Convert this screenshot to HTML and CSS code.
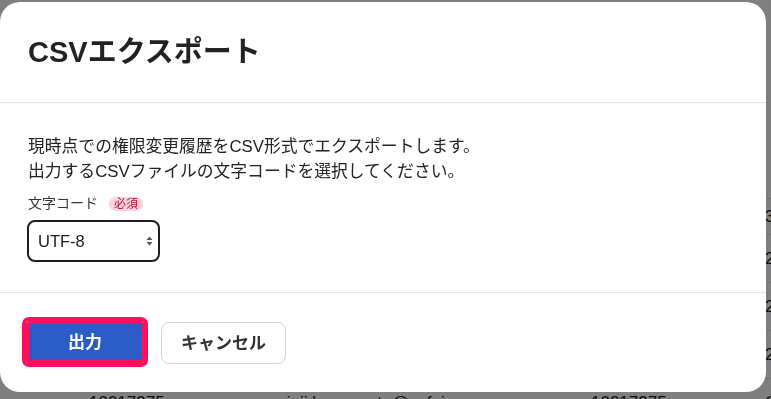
FILE: index.html
```html
<!DOCTYPE html>
<html lang="ja">
<head>
<meta charset="utf-8">
<title>CSVエクスポート</title>
<link rel="stylesheet" href="styles.css">
</head>
<body>
<div class="page">
  <div class="page-top"></div>
  <div class="row row-head"><span></span><span></span><span></span><span>3</span></div>
  <div class="row"><span></span><span></span><span></span><span>2024</span></div>
  <div class="row"><span></span><span></span><span></span><span>2024</span></div>
  <div class="row"><span></span><span></span><span></span><span>2024</span></div>
  <div class="row"><span>10017975</span><span class="mail">rinji.kumamoto@sofr.jp</span><span>10017975</span><span>C</span></div>
</div>

<div class="overlay">
  <div class="modal" role="dialog" aria-labelledby="dlg-title">
    <div class="modal-header">
      <h2 id="dlg-title" class="modal-title">CSVエクスポート</h2>
    </div>
    <div class="modal-body">
      <p class="desc">現時点での権限変更履歴をCSV形式でエクスポートします。<br>出力するCSVファイルの文字コードを選択してください。</p>
      <div class="field-label"><span>文字コード</span><span class="badge">必須</span></div>
      <div class="select-wrap">
        <select class="select">
          <option>UTF-8</option>
          <option>Shift_JIS</option>
        </select>
        <svg class="select-arrows" width="7" height="10" viewBox="0 0 7 10" aria-hidden="true">
          <path d="M3.5 0.5 L6.5 4 L0.5 4 Z" fill="#555"/>
          <path d="M0.5 6 L6.5 6 L3.5 9.5 Z" fill="#555"/>
        </svg>
      </div>
    </div>
    <div class="modal-footer">
      <button class="btn btn-primary" type="button">出力</button>
      <button class="btn btn-secondary" type="button">キャンセル</button>
    </div>
  </div>
</div>
</body>
</html>
```

FILE: styles.css
```css
* { box-sizing: border-box; }

html, body {
  margin: 0;
  padding: 0;
  width: 771px;
  height: 399px;
  overflow: hidden;
}

body {
  background: #ffffff;
  font-family: "Liberation Sans", "Noto Sans CJK JP", sans-serif;
  color: #222222;
}

/* underlying page (dimmed) */
.page {
  width: 771px;
}
.page-top {
  height: 199px;
  border-bottom: 1px solid #e2e2e2;
}
.row {
  display: grid;
  grid-template-columns: 89px 192px 310px 174px 1fr;
  height: 48px;
  border-bottom: 1px solid #e2e2e2;
  align-items: start;
  padding-top: 14px;
  font-size: 17px;
  line-height: 20px;
  color: #1a1a1a;
}
.row::before { content: ""; }
.row-head { height: 36px; padding-top: 8px; }
.row .mail { color: #3a1010; }

/* overlay */
.overlay {
  position: fixed;
  inset: 0;
  background: rgba(0, 0, 0, 0.5);
  display: flex;
  padding: 2px 5px 7px 0;
}

.modal {
  flex: 1;
  background: #ffffff;
  border-radius: 20px;
  display: flex;
  flex-direction: column;
  overflow: hidden;
}

.modal-header {
  padding: 29px 28px;
  border-bottom: 1px solid #e6e6e6;
}
.modal-title {
  margin: 0;
  font-size: 29px;
  line-height: 42px;
  font-weight: 700;
  color: #222222;
}

.modal-body {
  padding: 31px 28px 30px;
  border-bottom: 1px solid #e6e6e6;
}
.desc {
  margin: 0;
  font-size: 16.8px;
  line-height: 25px;
  color: #222222;
}

.field-label {
  display: flex;
  align-items: center;
  gap: 11px;
  margin-top: 9px;
  font-size: 14px;
  line-height: 21px;
  color: #333333;
}
.badge {
  display: inline-block;
  height: 14px;
  padding: 0 5px;
  border-radius: 7px;
  background: #fbd3db;
  color: #c0163c;
  font-size: 12px;
  line-height: 14px;
}

.select-wrap {
  position: relative;
  width: 133px;
  margin-top: 6px;
  margin-left: -1px;
}
.select {
  -webkit-appearance: none;
  appearance: none;
  display: block;
  width: 133px;
  height: 42px;
  border: 2px solid #1e1e1e;
  border-radius: 8px;
  background: #ffffff;
  padding: 0 24px 0 9px;
  font-family: "Liberation Sans", "Noto Sans CJK JP", sans-serif;
  font-size: 16.5px;
  color: #1a1a1a;
}
.select-arrows {
  position: absolute;
  right: 7px;
  top: 16px;
  pointer-events: none;
}

.modal-footer {
  display: flex;
  align-items: center;
  gap: 17px;
  padding: 27px 26px 28px;
}

.btn {
  height: 42px;
  font-family: "Liberation Sans", "Noto Sans CJK JP", sans-serif;
  font-size: 17px;
  font-weight: 700;
  line-height: 1;
  cursor: pointer;
}
.btn-primary {
  width: 118px;
  background: #2b5cc7;
  color: #ffffff;
  border: 3px solid #fe0f5e;
  border-radius: 3px;
  outline: 4px solid #fe0f5e;
  outline-offset: 0;
}
.btn-secondary {
  width: 125px;
  background: #ffffff;
  color: #333333;
  border: 1px solid #d4d4d4;
  border-radius: 8px;
  margin-top: 2px;
}
```
